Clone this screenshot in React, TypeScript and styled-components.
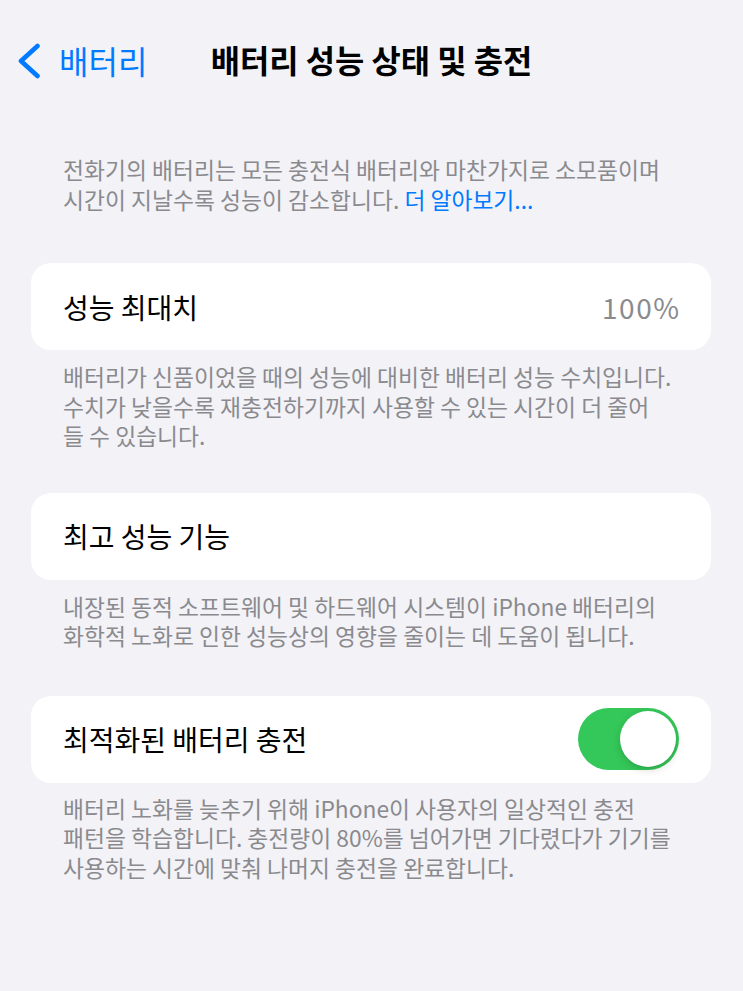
import React from "react";
import styled, { createGlobalStyle } from "styled-components";

const GlobalStyle = createGlobalStyle`
  html, body {
    margin: 0;
    padding: 0;
    background: #f2f2f7;
  }
  body {
    font-family: "Noto Sans CJK KR", "Noto Sans", sans-serif;
    -webkit-font-smoothing: antialiased;
  }
`;

const Page = styled.div`
  width: 743px;
  min-height: 991px;
  background: #f2f2f7;
  display: flex;
  flex-direction: column;
`;

const NavBar = styled.div`
  height: 122px;
  display: grid;
  grid-template-columns: 1fr auto 1fr;
  align-items: center;
  padding: 0 17px;
`;

const BackButton = styled.div`
  display: flex;
  align-items: center;
  gap: 18px;
  color: #007aff;
  font-size: 32px;
  line-height: 1;
`;

const BackLabel = styled.span`
  position: relative;
  top: -1px;
`;

const Title = styled.div`
  font-size: 31.8px;
  font-weight: 700;
  color: #000;
  line-height: 1;
  position: relative;
  top: -1px;
`;

const Content = styled.div`
  padding: 0 32px 0 31px;
  display: flex;
  flex-direction: column;
`;

const Note = styled.div<{ $mt: number }>`
  margin-top: ${(p) => p.$mt}px;
  padding: 0 32px;
  display: flex;
  flex-direction: column;
  font-size: 22.8px;
  color: #8a8a8e;
  white-space: nowrap;
`;

const NoteLine = styled.span`
  display: block;
  height: 29.5px;
  line-height: 29.5px;
`;

const Link = styled.span`
  color: #007aff;
`;

const Card = styled.div<{ $mt: number }>`
  margin-top: ${(p) => p.$mt}px;
  height: 87px;
  background: #ffffff;
  border-radius: 20px;
  display: flex;
  align-items: center;
  justify-content: space-between;
  padding: 0 32px;
`;

const Label = styled.span`
  font-size: 28px;
  color: #000;
`;

const Value = styled.span`
  font-size: 28px;
  color: #8a8a8e;
  letter-spacing: 1.5px;
  margin-right: -1.5px;
`;

const Toggle = styled.div`
  width: 101px;
  height: 62px;
  border-radius: 31px;
  background: #34c759;
  display: flex;
  align-items: center;
  justify-content: flex-end;
  padding: 0 3px;
  box-sizing: border-box;
`;

const Knob = styled.div`
  width: 56px;
  height: 56px;
  border-radius: 50%;
  background: #fff;
  box-shadow: 0 3px 8px rgba(0, 0, 0, 0.15), 0 1px 1px rgba(0, 0, 0, 0.06);
`;

const notes = {
  intro: [
    "전화기의 배터리는 모든 충전식 배터리와 마찬가지로 소모품이며",
  ],
  max: [
    "배터리가 신품이었을 때의 성능에 대비한 배터리 성능 수치입니다.",
    "수치가 낮을수록 재충전하기까지 사용할 수 있는 시간이 더 줄어",
    "들 수 있습니다.",
  ],
  peak: [
    "내장된 동적 소프트웨어 및 하드웨어 시스템이 iPhone 배터리의",
    "화학적 노화로 인한 성능상의 영향을 줄이는 데 도움이 됩니다.",
  ],
  optimized: [
    "배터리 노화를 늦추기 위해 iPhone이 사용자의 일상적인 충전",
    "패턴을 학습합니다. 충전량이 80%를 넘어가면 기다렸다가 기기를",
    "사용하는 시간에 맞춰 나머지 충전을 완료합니다.",
  ],
};

function Lines({ lines }: { lines: string[] }) {
  return (
    <>
      {lines.map((l) => (
        <NoteLine key={l}>{l}</NoteLine>
      ))}
    </>
  );
}

export default function App() {
  return (
    <Page>
      <GlobalStyle />
      <NavBar>
        <BackButton>
          <svg width="24" height="36" viewBox="0 0 24 36" fill="none">
            <path
              d="M20.5 3 L4 18 L20.5 33"
              stroke="#007aff"
              strokeWidth="4.6"
              strokeLinecap="round"
              strokeLinejoin="round"
            />
          </svg>
          <BackLabel>배터리</BackLabel>
        </BackButton>
        <Title>배터리 성능 상태 및 충전</Title>
        <div />
      </NavBar>
      <Content>
        <Note $mt={33}>
          <Lines lines={notes.intro} />
          <NoteLine>
            시간이 지날수록 성능이 감소합니다. <Link>더 알아보기...</Link>
          </NoteLine>
        </Note>
        <Card $mt={49}>
          <Label>성능 최대치</Label>
          <Value>100%</Value>
        </Card>
        <Note $mt={12}>
          <Lines lines={notes.max} />
        </Note>
        <Card $mt={42}>
          <Label>최고 성능 기능</Label>
        </Card>
        <Note $mt={12}>
          <Lines lines={notes.peak} />
        </Note>
        <Card $mt={45}>
          <Label>최적화된 배터리 충전</Label>
          <Toggle>
            <Knob />
          </Toggle>
        </Card>
        <Note $mt={11}>
          <Lines lines={notes.optimized} />
        </Note>
      </Content>
    </Page>
  );
}
